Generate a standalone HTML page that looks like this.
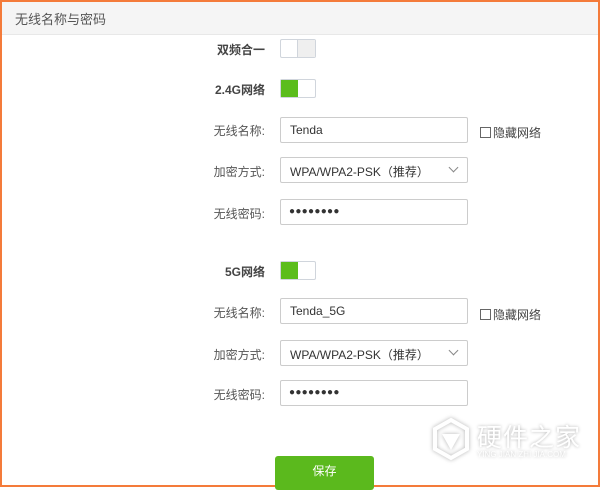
<!DOCTYPE html>
<html><head><meta charset="utf-8"><style>
body{margin:0;width:600px;height:487px;overflow:hidden;font-family:"Liberation Sans","Noto Sans CJK SC",sans-serif;background:#fff;position:relative}
.frame{position:absolute;left:0;top:0;width:596px;height:483px;border:2px solid #f47b3a}
.hd{position:absolute;left:2px;top:2px;width:596px;height:32px;background:#f5f5f5;border-bottom:1px solid #e8e8e8}
.hd span{position:absolute;left:13px;top:7px;font-size:13px;color:#555}
.lab{position:absolute;right:335px;font-size:12px;color:#555;white-space:nowrap}
.b{font-weight:bold;color:#444}
.tg{position:absolute;left:280px;width:36px;height:19px;border:1px solid #d0d5dc;border-radius:2px;background:#fff;box-sizing:border-box}
.tg i{position:absolute;top:0;width:17px;height:17px}
.off i{right:0;background:#efefef;border-left:1px solid #d0d5dc}
.on i{left:0;background:#5bbd1c}
.in{position:absolute;left:280px;width:188px;height:26px;border:1px solid #ccc;border-radius:2px;box-sizing:border-box;font-size:12px;color:#333;padding:5px 0 0 9px}
.dots{font-size:10px;letter-spacing:0.3px;padding-top:6px;padding-left:8px}
.arr{position:absolute;right:10px;top:6px;width:6px;height:6px;border-right:1px solid #888;border-bottom:1px solid #888;transform:rotate(45deg)}
.cb{position:absolute;left:480px;font-size:12px;color:#444}
.cb b{display:inline-block;width:9px;height:9px;border:1px solid #666;vertical-align:-1px;margin-right:2px;font-weight:normal}
.btn{position:absolute;left:275px;top:456px;width:99px;height:34px;background:#5bb91d;border-radius:3px;color:#fff;font-size:12px;text-align:center;line-height:30px}
.wm{position:absolute;color:#fff;text-shadow:0 0 3px rgba(0,0,0,0.3);white-space:nowrap}
</style></head><body>
<div class="frame"></div>
<div class="hd"><span>无线名称与密码</span></div>

<div class="lab b" style="top:41px">双频合一</div>
<div class="tg off" style="top:39px"><i></i></div>
<div class="lab b" style="top:81px">2.4G网络</div>
<div class="tg on" style="top:79px"><i></i></div>

<div class="lab" style="top:122px">无线名称:</div>
<div class="in" style="top:117px">Tenda</div>
<div class="cb" style="top:124px"><b></b>隐藏网络</div>
<div class="lab" style="top:163px">加密方式:</div>
<div class="in" style="top:157px">WPA/WPA2-PSK（推荐）<span class="arr"></span></div>
<div class="lab" style="top:205px">无线密码:</div>
<div class="in dots" style="top:199px">●●●●●●●●</div>

<div class="lab b" style="top:263px">5G网络</div>
<div class="tg on" style="top:261px"><i></i></div>

<div class="lab" style="top:304px">无线名称:</div>
<div class="in" style="top:298px">Tenda_5G</div>
<div class="cb" style="top:306px"><b></b>隐藏网络</div>
<div class="lab" style="top:346px">加密方式:</div>
<div class="in" style="top:340px">WPA/WPA2-PSK（推荐）<span class="arr"></span></div>
<div class="lab" style="top:386px">无线密码:</div>
<div class="in dots" style="top:380px">●●●●●●●●</div>

<div class="btn">保存</div>
<svg width="40" height="44" style="position:absolute;left:431px;top:417px;filter:drop-shadow(0 0 2px rgba(0,0,0,0.3))" viewBox="0 0 40 44"><path d="M20 3 L36 12 L36 32 L20 41 L4 32 L4 12 Z" fill="none" stroke="#fff" stroke-width="4"/><path d="M11 17 L29 17 L20 33 Z" fill="#fff"/></svg>
<div class="wm" style="left:477px;top:418px;font-size:25px;letter-spacing:1px">硬件之家</div>
<div class="wm" style="left:477px;top:450px;font-size:8px">YING JIAN ZHI JIA.COM</div>
</body></html>
